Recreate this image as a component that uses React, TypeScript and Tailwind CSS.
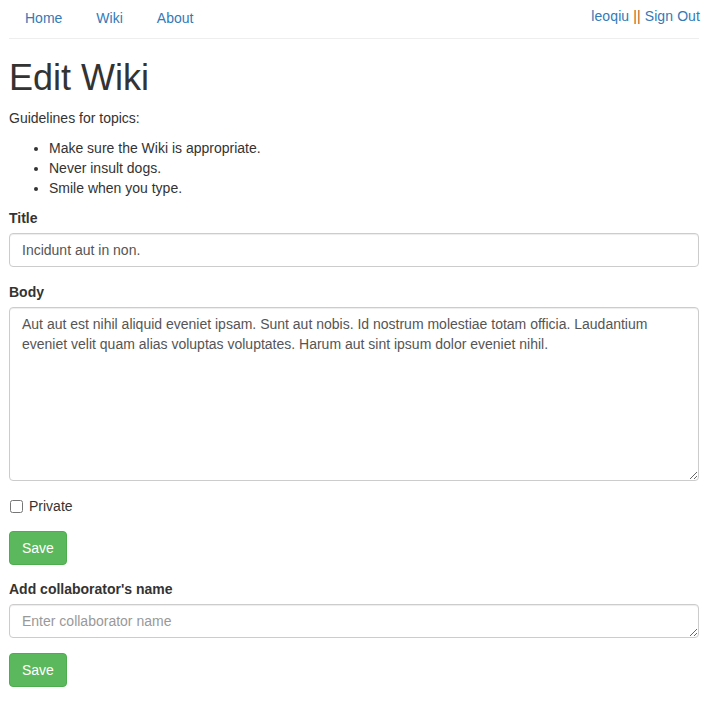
export default function App() {
  return (
    <div className="min-h-screen bg-white px-[9px] font-['Liberation_Sans',Arial,sans-serif] text-[14px] leading-[20px] text-[#333]">
      {/* Header nav */}
      <div className="flex items-start justify-between">
        <ul className="flex">
          <li>
            <a href="#" className="block px-4 py-2 text-[#337ab7]">Home</a>
          </li>
          <li className="ml-[2px]">
            <a href="#" className="block px-4 py-2 text-[#337ab7]">Wiki</a>
          </li>
          <li className="ml-[2px]">
            <a href="#" className="block px-4 py-2 text-[#337ab7]">About</a>
          </li>
        </ul>
        <div className="mt-[6px] -mr-[1px] tracking-[0.1px]">
          <a href="#" className="text-[#337ab7]">leoqiu</a>{' '}
          <span className="text-[#b2621f]">||</span>{' '}
          <a href="#" className="text-[#337ab7]">Sign Out</a>
        </div>
      </div>
      <hr className="mt-[2px] border-t border-[#eee]" />

      <h1 className="mt-[19px] mb-[10px] text-[36px] leading-[39.6px] font-normal">Edit Wiki</h1>
      <p className="mb-[10px]">Guidelines for topics:</p>
      <ul className="mb-[10px] list-disc pl-10">
        <li>Make sure the Wiki is appropriate.</li>
        <li>Never insult dogs.</li>
        <li>Smile when you type.</li>
      </ul>

      <form>
        <div className="mb-[15px]">
          <label className="mb-[5px] block font-bold">Title</label>
          <input
            type="text"
            defaultValue="Incidunt aut in non."
            className="block h-[34px] w-full rounded border border-[#ccc] px-3 py-[6px] text-[#555] shadow-[inset_0_1px_1px_rgba(0,0,0,0.075)] outline-none"
          />
        </div>
        <div className="mb-[15px]">
          <label className="mb-[5px] block font-bold">Body</label>
          <textarea
            rows={8}
            defaultValue="Aut aut est nihil aliquid eveniet ipsam. Sunt aut nobis. Id nostrum molestiae totam officia. Laudantium eveniet velit quam alias voluptas voluptates. Harum aut sint ipsum dolor eveniet nihil."
            className="block h-[174px] w-full rounded border border-[#ccc] px-3 py-[6px] text-[#555] shadow-[inset_0_1px_1px_rgba(0,0,0,0.075)] outline-none"
          />
        </div>
        <div className="mb-[15px]">
          <label className="flex items-start">
            <input type="checkbox" className="mt-[4px] ml-[1px] h-[13px] w-[13px]" />
            <span className="ml-[6px]">Private</span>
          </label>
        </div>
        <button
          type="button"
          className="block h-[34px] rounded border border-[#4cae4c] bg-[#5cb85c] px-3 text-white"
        >
          Save
        </button>
      </form>

      <form className="mt-[14px]">
        <div className="mb-[15px]">
          <label className="mb-[5px] block font-bold">Add collaborator's name</label>
          <textarea
            rows={1}
            placeholder="Enter collaborator name"
            className="block h-[34px] w-full rounded border border-[#ccc] px-3 py-[6px] text-[#555] shadow-[inset_0_1px_1px_rgba(0,0,0,0.075)] outline-none placeholder:text-[#999]"
          />
        </div>
        <button
          type="button"
          className="block h-[34px] rounded border border-[#4cae4c] bg-[#5cb85c] px-3 text-white"
        >
          Save
        </button>
      </form>
    </div>
  )
}
